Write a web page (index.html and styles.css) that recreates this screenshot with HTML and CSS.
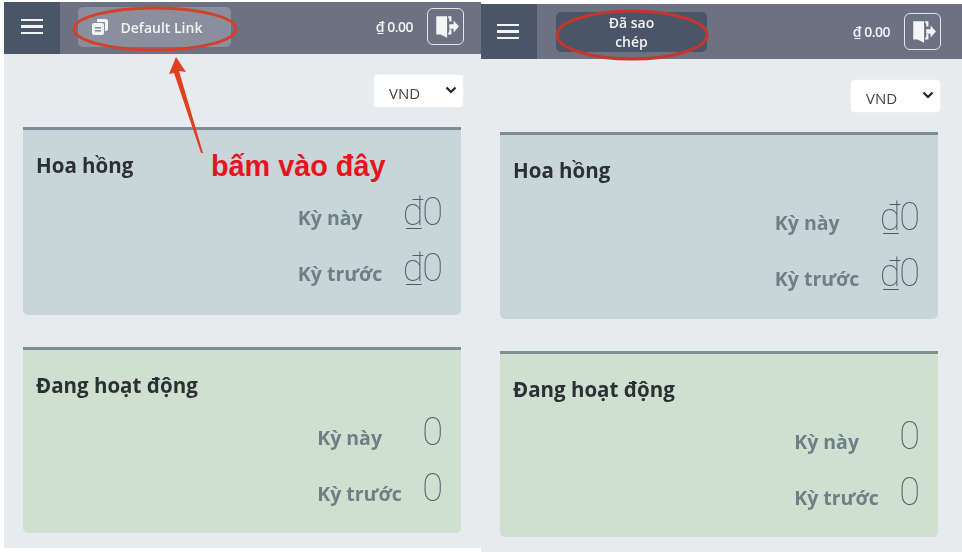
FILE: index.html
```html
<!DOCTYPE html>
<html lang="vi">
<head>
  <meta charset="UTF-8">
  <title>Default Link</title>
  <link rel="stylesheet" href="styles.css">
</head>
<body>
  <div class="page">
    <div class="screen screen-left">
      <div class="topbar">
        <div class="menu-btn"><span></span><span></span><span></span></div>
        <div class="link-btn">
          <svg class="copy-icon" viewBox="0 0 16 16" width="16" height="16"><path d="M6 0h8a2 2 0 0 1 2 2v8a2 2 0 0 1-2 2h-1V4a1 1 0 0 0-1-1H5V1a1 1 0 0 1 1-1z" fill="#f1f3f5"/><rect x="0" y="4" width="12" height="12" rx="2" fill="#f1f3f5"/><rect x="3" y="8" width="6" height="1.6" fill="#8a8f9e"/><rect x="3" y="11" width="6" height="1.6" fill="#8a8f9e"/></svg>
          <span>Default Link</span>
        </div>
        <div class="balance">₫ 0.00</div>
        <div class="logout-btn">
          <svg viewBox="0 0 24 24" width="26" height="26"><path d="M3 2h10v20l-6-3H3z" fill="#f4f5f7"/><path d="M14 2h3v5h-2V4h-1zM14 17h1v-3h2v5h-3z" fill="#f4f5f7"/><path d="M15 9.5h4V6l5 5.500-5 5.500v-3.500h-4z" fill="#f4f5f7"/></svg>
        </div>
      </div>
      <div class="content">
        <div class="select-row"><select class="currency"><option>VND</option></select></div>
        <div class="card card-blue">
          <h3>Hoa hồng</h3>
          <div class="stats">
            <div class="stat"><span class="stat-label">Kỳ này</span><span class="stat-value">₫0</span></div>
            <div class="stat"><span class="stat-label">Kỳ trước</span><span class="stat-value">₫0</span></div>
          </div>
        </div>
        <div class="card card-green">
          <h3>Đang hoạt động</h3>
          <div class="stats">
            <div class="stat"><span class="stat-label">Kỳ này</span><span class="stat-value">0</span></div>
            <div class="stat"><span class="stat-label">Kỳ trước</span><span class="stat-value">0</span></div>
          </div>
        </div>
      </div>
    </div>

    <div class="screen screen-right">
      <div class="topbar">
        <div class="menu-btn"><span></span><span></span><span></span></div>
        <div class="link-btn link-btn-copied"><span>Đã sao<br>chép</span></div>
        <div class="balance">₫ 0.00</div>
        <div class="logout-btn">
          <svg viewBox="0 0 24 24" width="26" height="26"><path d="M3 2h10v20l-6-3H3z" fill="#f4f5f7"/><path d="M14 2h3v5h-2V4h-1zM14 17h1v-3h2v5h-3z" fill="#f4f5f7"/><path d="M15 9.5h4V6l5 5.500-5 5.500v-3.500h-4z" fill="#f4f5f7"/></svg>
        </div>
      </div>
      <div class="content">
        <div class="select-row"><select class="currency"><option>VND</option></select></div>
        <div class="card card-blue">
          <h3>Hoa hồng</h3>
          <div class="stats">
            <div class="stat"><span class="stat-label">Kỳ này</span><span class="stat-value">₫0</span></div>
            <div class="stat"><span class="stat-label">Kỳ trước</span><span class="stat-value">₫0</span></div>
          </div>
        </div>
        <div class="card card-green">
          <h3>Đang hoạt động</h3>
          <div class="stats">
            <div class="stat"><span class="stat-label">Kỳ này</span><span class="stat-value">0</span></div>
            <div class="stat"><span class="stat-label">Kỳ trước</span><span class="stat-value">0</span></div>
          </div>
        </div>
      </div>
    </div>

    <!-- red marks drawn on top of the two screenshots -->
    <svg class="marks" viewBox="0 0 962 552" width="962" height="552">
      <ellipse cx="155" cy="29" rx="81" ry="21" fill="none" stroke="#d5402b" stroke-width="3"/>
      <ellipse cx="632" cy="35" rx="75" ry="24" fill="none" stroke="#c9352c" stroke-width="3"/>
      <path d="M176 57 L186 72 L179 71 L203 153 L201 153 L174 73 L169 74z" fill="#e0401f"/>
    </svg>
    <div class="callout">bấm vào đây</div>
  </div>
</body>
</html>
```

FILE: styles.css
```css
body {
  margin: 0;
  background: #fff;
  font-family: "Open Sans", "Noto Sans", sans-serif;
}
.page {
  position: relative;
  display: flex;
  width: 962px;
  height: 552px;
  overflow: hidden;
}
.screen {
  width: 477px;
  background: #e8ebee;
  filter: blur(0.5px);
}
.screen-left {
  margin: 2px 0 4px 4px;
}
.screen-right {
  width: 481px;
  margin-top: 4px;
}
.topbar {
  display: flex;
  align-items: center;
  height: 52px;
  background: #6c7282;
  color: #f1f3f5;
}
.screen-right .topbar {
  height: 55px;
}
.menu-btn {
  display: flex;
  flex-direction: column;
  justify-content: center;
  gap: 4px;
  width: 56px;
  height: 100%;
  padding-left: 16px;
  box-sizing: border-box;
  background: #4a5568;
}
.screen-left .menu-btn {
  padding: 0 0 3px 17px;
}
.menu-btn span {
  display: block;
  width: 22px;
  height: 2.500px;
  background: #f1f3f5;
}
.link-btn {
  display: flex;
  align-items: center;
  justify-content: center;
  gap: 13px;
  width: 153px;
  height: 40px;
  margin: 0 0 2px 18px;
  border-radius: 5px;
  background: #8a8f9e;
  font-size: 14px;
  font-weight: 600;
}
.link-btn-copied {
  width: 151px;
  margin: 0 0 0 19px;
  background: #4a5568;
  text-align: center;
  line-height: 19px;
}
.copy-icon {
  margin-left: -15px;
}
.balance {
  margin: 0 0 3px auto;
  font-size: 14px;
  font-weight: 600;
  letter-spacing: -0.5px;
}
.logout-btn {
  display: flex;
  align-items: center;
  justify-content: center;
  width: 35px;
  height: 35px;
  margin: 0 17px 3px 14px;
  border: 1.500px solid #e4e6ea;
  border-radius: 6px;
}
.screen-right .balance {
  margin-bottom: 0;
}
.screen-right .logout-btn {
  margin: 0 21px 0 14px;
}
.content {
  padding: 20px 20px 14px 19px;
}
.screen-right .content {
  padding-right: 24px;
}
.select-row {
  display: flex;
  justify-content: flex-end;
  margin-right: -3px;
}
.currency {
  appearance: none;
  width: 91px;
  height: 34px;
  padding: 3px 0 0 15px;
  border: 1px solid #eceef0;
  border-radius: 4px;
  background: #fff url("data:image/svg+xml,%3Csvg xmlns='http://www.w3.org/2000/svg' viewBox='0 0 12 8'%3E%3Cpath d='M1.500 1.500 6 6l4.500-4.500' fill='none' stroke='%23222' stroke-width='2.200'/%3E%3C/svg%3E") no-repeat right 6px top 11px / 12px 8px;
  color: #444;
  font-family: "Open Sans", sans-serif;
  font-size: 15px;
}
.card {
  height: 188px;
  box-sizing: border-box;
  padding: 22px 19px 0 13px;
  border-top: 3px solid #7f8c96;
  border-radius: 0 0 5px 5px;
}
.card-blue {
  margin-top: 19px;
  background: #c8d6da;
}
.screen-right .card-blue {
  height: 187px;
}
.card-green {
  height: 186px;
  margin-top: 32px;
  background: #cfdfd0;
  border-top-color: #7e8f8e;
}
.card h3 {
  margin: 0;
  color: #2b3033;
  font-size: 20.500px;
  font-weight: 700;
  line-height: 26px;
}
.stats {
  display: flex;
  flex-direction: column;
  align-items: flex-end;
  gap: 12px;
  margin-top: 17px;
}
.stat {
  display: flex;
  align-items: center;
  justify-content: flex-end;
  height: 44px;
}
.stat-label {
  width: 105px;
  color: #6f7f86;
  font-size: 19.500px;
  font-weight: 700;
}
.stat-value {
  margin: 0 1px 10px 0;
  color: #4f5f66;
  font-family: Roboto, sans-serif;
  font-size: 38px;
  font-weight: 100;
  letter-spacing: -2px;
  text-align: right;
}
.marks {
  position: absolute;
  top: 0;
  left: 0;
}
.callout {
  position: absolute;
  top: 148px;
  left: 211px;
  color: #e8141c;
  font-family: "Liberation Sans", sans-serif;
  font-size: 28.800px;
  font-weight: 700;
  line-height: 36px;
}
```
